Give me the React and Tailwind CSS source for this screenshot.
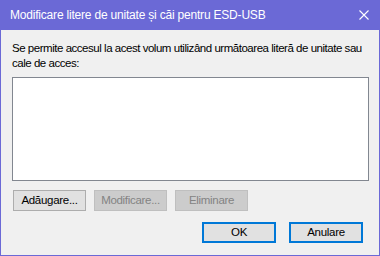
export default function App() {
  return (
    <div className="w-[380px] h-[256px] bg-[#6b69d6] p-px pt-0 flex flex-col" style={{ fontFamily: '"Liberation Sans", Arial, sans-serif' }}>
      <div className="h-[30px] flex items-center justify-between pl-[9px] pr-[9px] text-white">
        <span className="text-[12px] tracking-[-0.2px]">Modificare litere de unitate și căi pentru ESD-USB</span>
        <svg width="10" height="10" viewBox="0 0 10 10" className="mr-[1px]">
          <path d="M0.5 0.5 L9.5 9.5 M9.5 0.5 L0.5 9.5" stroke="white" strokeWidth="1.1" />
        </svg>
      </div>
      <div className="flex-1 bg-[#f0f0f0] px-[11px] pt-[11px] flex flex-col text-[12px] text-black">
        <p className="leading-[15px] w-[357px] text-[11.5px] tracking-[-0.47px]">
          Se permite accesul la acest volum utilizând următoarea literă de unitate sau cale de acces:
        </p>
        <div className="mt-[6px] h-[104px] w-[357px] bg-white border border-[#828790]" />
        <div className="mt-[9px] flex gap-[8px] pl-[1px] text-[11.5px] tracking-[-0.3px]">
          <button className="w-[73px] h-[21px] bg-[#e1e1e1] border border-[#adadad] text-black">Adăugare...</button>
          <button className="w-[73px] h-[21px] bg-[#cccccc] border border-[#bfbfbf] text-[#838383]">Modificare...</button>
          <button className="w-[73px] h-[21px] bg-[#cccccc] border border-[#bfbfbf] text-[#838383]">Eliminare</button>
        </div>
        <div className="mt-[11px] flex justify-end gap-[13px] pr-[5px] text-[11.5px] tracking-[-0.3px]">
          <button className="w-[74px] h-[21px] bg-[#e1e1e1] border-2 border-[#0078d7] text-black">OK</button>
          <button className="w-[74px] h-[21px] bg-[#e1e1e1] border-2 border-[#0078d7] text-black">Anulare</button>
        </div>
      </div>
    </div>
  );
}
